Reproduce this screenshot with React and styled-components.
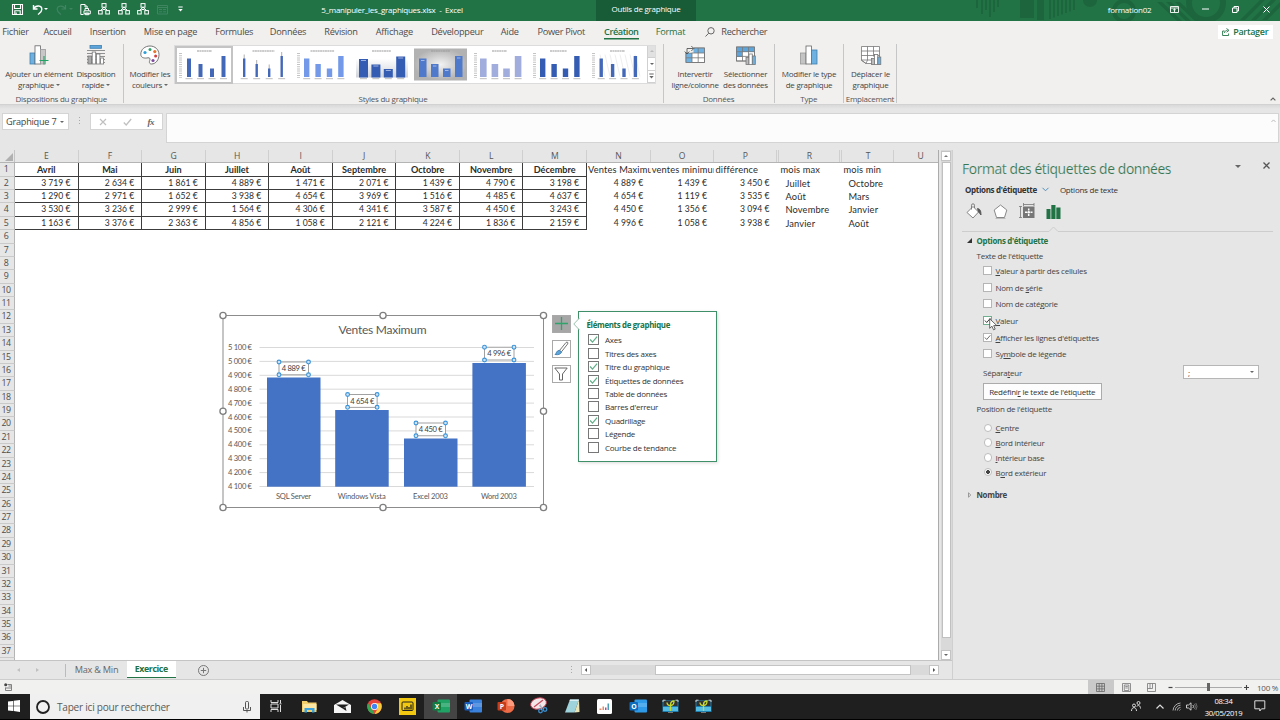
import React from "react";
import styled, { createGlobalStyle, css } from "styled-components";

const UI = `"Open Sans", "Noto Sans", sans-serif`;
const CAL = `Lato, "Open Sans", sans-serif`;
const GREEN = "#217346";

const Global = createGlobalStyle`
  *, *::before, *::after { box-sizing: border-box; }
  body { margin: 0; overflow: hidden; font-family: ${UI}; font-size: 8px; letter-spacing: -0.25px; color: #444; }
  svg { display: block; flex: none; overflow: visible; }
`;

const Window = styled.div`
  width: 1280px; height: 720px; display: flex; flex-direction: column;
  background: #e6e6e6; overflow: hidden; white-space: nowrap;
`;

/* ---------- title bar ---------- */
const TitleBar = styled.header`
  height: 20.5px; flex: none; display: flex; align-items: center; background: ${GREEN};
  color: #fff; position: relative; padding-bottom: 2px;
`;
const Decor = styled.svg`position: absolute; left: 970px; top: 0; overflow: hidden;`;
const Slot = styled.div`
  width: ${p => p.$w}px; margin-left: ${p => p.$l || 0}px; flex: none; display: flex;
  align-items: center; justify-content: center; position: relative;
`;
const ContextTab = styled(Slot)`height: 20.5px; margin-top: 2px; padding-bottom: 3px; background: #185c37;`;

/* ---------- ribbon ---------- */
const TabStrip = styled.nav`
  height: 22.5px; flex: none; display: flex; align-items: center; background: #f1f0ef; font-size: 9.2px;
`;
const Tab = styled.div`
  width: ${p => p.$w}px; margin-left: ${p => p.$l}px; flex: none; display: flex; justify-content: center;
  color: ${p => p.$green ? GREEN : "#4c4c4c"}; font-weight: ${p => p.$on ? 600 : 400}; line-height: 13px;
  letter-spacing: ${p => p.$on ? -0.45 : -0.27}px;
  ${p => p.$on && css`box-shadow: 0 1.5px 0 ${GREEN};`}
`;
const Share = styled.div`
  margin-left: auto; margin-right: 7px; width: 55.5px; height: 14.5px; background: #fff; color: ${GREEN};
  display: flex; align-items: center; justify-content: center; gap: 3px; font-weight: 600; font-size: 9px; letter-spacing: -0.3px;
`;
const Ribbon = styled.section`
  height: 62px; flex: none; display: flex; background: #f1f0ef; position: relative; border-bottom: 1px solid #d2d2d2;
`;
const Group = styled.div`
  width: ${p => p.$w}px; height: 58.5px; margin-top: 1px; border-right: 1px solid #c6c6c6; flex: none;
  display: flex; flex-direction: column; justify-content: space-between;
`;
const GroupBody = styled.div`display: flex; height: 44px;`;
const GroupName = styled.div`text-align: center; line-height: 10px; color: #555; margin-bottom: -1px;`;
const BigButton = styled.div`
  width: ${p => p.$w}px; margin-left: ${p => p.$l || 0}px; flex: none; display: flex; flex-direction: column;
  align-items: center; line-height: 11px; padding-top: 1px;
  svg { margin-bottom: 3px; }
`;
const Line = styled.div`display: flex; align-items: center; gap: 2px;`;
const Caret = styled.i`
  width: 0; height: 0; border: ${p => p.$s || 2}px solid transparent; border-bottom: 0;
  border-top-color: ${p => p.$c || "#666"};
`;
const Gallery = styled.div`
  display: flex; width: 482px; height: 39.5px; margin: 0.5px 0 0 2px; background: #fff; border: 1px solid #dcdcdc;
`;
const Thumb = styled.div`
  width: 59px; height: 38px; flex: none;
  ${p => p.$on && css`box-shadow: inset 0 0 0 2px #c4c4c4; width: 58px; margin-right: 1px;`}
`;
const GalleryNav = styled.div`
  width: 9px; margin-left: auto; display: flex; flex-direction: column; border-left: 1px solid #d0d0d0;
`;
const NavCell = styled.div`
  flex: 1; display: flex; align-items: center; justify-content: center; border-bottom: 1px solid #d0d0d0;
  background: ${p => p.$off ? "#e1e1e1" : "#fff"};
`;
const RibbonCollapse = styled.div`margin: 54px 4px 0 auto;`;

/* ---------- formula bar ---------- */
const FormulaBar = styled.section`
  height: 45px; flex: none; display: flex; align-items: flex-start; padding: 8px 1.5px 0 1.5px;
  background: linear-gradient(#d9d9d9, #e6e6e6 4px);
`;
const NameBox = styled.div`
  width: 67.5px; height: 17px; background: #fff; border: 1px solid #d4d4d4; display: flex; align-items: center;
  justify-content: space-between; padding: 0 4px 0 3.5px; font-size: 9.2px;
`;
const Grip = styled.div`
  width: 1px; height: 9px; margin: ${p => p.$m || "4px 10px"};
  background: repeating-linear-gradient(#aaa 0 1px, transparent 1px 3px);
`;
const FxBox = styled.div`
  width: 73px; height: 17px; background: #fff; border: 1px solid #d4d4d4; display: flex; align-items: center;
  justify-content: space-between; padding: 0 8px;
`;
const Fx = styled.span`font: italic 700 9px "Liberation Serif", serif; color: #666; letter-spacing: -0.5px;`;
const FormulaInput = styled.div`
  flex: 1; margin-left: 3px; height: 30px; background: #fcfcfc; border: 1px solid #d4d4d4; display: flex;
  justify-content: flex-end; padding: 5px 2px;
`;

/* ---------- work area ---------- */
const Work = styled.main`height: 529px; flex: none; display: flex;`;
const Left = styled.div`width: 952px; flex: none; display: flex; flex-direction: column;`;
const SheetRow = styled.div`height: 510px; display: flex;`;
const Sheet = styled.div`width: 938.5px; height: 510px; position: relative; overflow: hidden; background: #fff; border-right: 1px solid #ababab;`;
const HeadRow = styled.div`height: 13.3px; display: flex; background: #e6e6e6; border-bottom: 1px solid #b4b4b4;`;
const Corner = styled.div`
  width: 15px; height: 12.3px; border-right: 1px solid #c4c4c4; flex: none; display: flex; align-items: flex-end;
  justify-content: flex-end; padding: 1px;
`;
const ColHead = styled.div`
  width: ${p => p.$w}px; flex: none; font-size: 8.6px; line-height: 13px; text-align: center; color: #555;
  border-right: 1px solid #cfcfcf;
`;
const Row = styled.div`height: 13.39px; display: flex;`;
const RowHead = styled.div`
  width: 15px; flex: none; background: #e6e6e6; border-right: 1px solid #b4b4b4; border-bottom: 1px solid #cacaca;
  font-size: 8.8px; letter-spacing: -0.45px; line-height: 13.5px; text-align: center; color: #4c4c4c; padding-right: 2px;
`;
const Cell = styled.div`
  width: ${p => p.$w}px; flex: none; font-family: ${CAL}; font-size: 8.6px; letter-spacing: 0; color: #2c2c2c; line-height: 13.4px;
  text-align: ${p => p.$k === "head" ? "center" : p.$k === "num" ? "right" : "left"};
  padding: ${p => p.$k === "num" ? `0 ${p.$box ? 7 : 7.5}px 0 0` : p.$k === "ind" ? "0 0 0 6px" : p.$k === "txt" ? "0 0 0 1px" : 0};
  ${p => p.$k === "head" && css`font-weight: 700; font-size: 9.1px;`}
  ${p => (p.$k === "txt" || p.$k === "ind") && css`font-size: 9.3px; letter-spacing: 0.14px;`}
  ${p => p.$box && css`border-right: 1px solid #3c3c3c; border-bottom: 1px solid #3c3c3c;`}
  overflow: hidden;
`;

const VScroll = styled.div`
  width: 11px; margin-left: 2px; display: flex; flex-direction: column; align-items: center; background: #d9d9d9; padding-top: 1px;
`;
const ScrollBtn = styled.div`
  width: 10px; height: 10px; background: #fff; border: 1px solid #c4c4c4; display: flex; align-items: center; justify-content: center; flex: none;
`;
const VThumb = styled.div`width: 9px; height: 476px; background: #fff; border: 1px solid #c0c0c0; margin-top: 1px;`;
const Spacer = styled.div`flex: 1;`;

const SheetTabs = styled.div`height: 19px; display: flex; background: #e6e6e6; border-top: 1px solid #c4c4c4; align-items: center; font-size: 9.2px;`;
const NavArrow = styled.div`width: 8px; margin-left: ${p => p.$l}px; display: flex; justify-content: center;`;
const SheetTab = styled.div`
  width: ${p => p.$w}px; margin-left: ${p => p.$l || 0}px; height: 18px; line-height: 17px; text-align: center;
  ${p => p.$on ? css`background: #fff; color: ${GREEN}; font-weight: 700; font-size: 8.8px; letter-spacing: -0.4px; height: 17px; align-self: flex-start; border-bottom: 1.5px solid ${GREEN};`
    : css`border-left: 1px solid #bbb; height: 13px; line-height: 12px; color: #666;`}
`;
const HTrack = styled.div`width: 358px; height: 10px; margin-left: 3.5px; flex: none; display: flex; background: #dadada;`;
const HThumb = styled.div`width: 256px; background: #fff; border: 1px solid #c4c4c4; margin-right: 18px;`;

/* ---------- chart overlay ---------- */
const ChartBox = styled.div`position: absolute; left: 215px; top: 155px; letter-spacing: 0;`;
const ChartButtons = styled.div`position: absolute; left: 552px; top: 164.5px; display: flex; flex-direction: column; gap: 6.7px;`;
const ChartButton = styled.div`
  width: 18.5px; height: 18.5px; border: 1px solid #a9a9a9; background: ${p => p.$on ? "#a6a6a6" : "#fff"};
  display: flex; align-items: center; justify-content: center;
`;
const Flyout = styled.div`
  position: absolute; left: 578px; top: 161px; width: 138.5px; height: 151px; background: #fff;
  border: 1.4px solid #3f9068; padding: 7.5px 0 0 7.5px; box-shadow: 1px 1px 3px rgba(0,0,0,.15);
`;
const FlyArrow = styled.svg`position: absolute; left: -6px; top: 5px;`;
const FlyTitle = styled.div`font-weight: 700; color: ${GREEN}; font-size: 7.9px; line-height: 10px; margin-bottom: 3.8px; letter-spacing: -0.33px;`;
const FlyRow = styled.div`height: 13.4px; display: flex; align-items: center; gap: 6px; padding-left: 1.5px; color: #333;`;
const Box = styled.span`
  width: ${p => p.$s}px; height: ${p => p.$s}px; border: 1px solid ${p => p.$c}; background: #fff; flex: none;
  display: flex; align-items: center; justify-content: center;
`;

/* ---------- format pane ---------- */
const Pane = styled.aside`flex: 1; border-left: 1px solid #cfcfcf; padding: 9px 7px 0 9px; display: flex; flex-direction: column;`;
const PaneHead = styled.div`display: flex; height: 18px; align-items: center;`;
const PaneTitle = styled.h1`margin: 0; font-weight: 400; font-size: 13.9px; color: #35754f; letter-spacing: -0.4px; width: 273px; -webkit-text-stroke: 0.15px #e6e6e6;`;
const PaneCaret = styled.div`margin-top: -4px;`;
const PaneClose = styled.div`margin: -5px 0 0 22px;`;
const PaneTabs = styled.div`display: flex; align-items: center; height: 14px; margin-top: 5px; padding-left: 3px; gap: 5px; color: #333;
  b { letter-spacing: -0.33px; }
  span { margin-left: 6px; }`;
const PaneIcons = styled.div`display: flex; align-items: center; height: 18px; margin-top: 6px; padding-left: 4px; gap: 11px;`;
const PaneRule = styled.svg`margin-top: 7px;`;
const Section = styled.div`display: flex; align-items: center; gap: 4.5px; margin: ${p => p.$m}; padding-left: 5px; height: 10px; font-weight: 700; font-size: 7.9px; letter-spacing: -0.3px; color: ${p => p.$c};`;
const SubLabel = styled.div`margin: ${p => p.$m}; height: 10px; line-height: 10px;`;
const Option = styled.div`
  height: ${p => p.$h}px; display: flex; align-items: center; gap: 3.5px; padding-left: 21px; position: relative;
  u { text-underline-offset: 1px; }
`;
const Radio = styled.span`
  width: 8.5px; height: 8.5px; border-radius: 50%; border: 1px solid #bdbdbd; flex: none; margin-left: 0.5px;
  background: ${p => p.$on ? "radial-gradient(#444 0 1.6px, #fff 2.2px)" : "#fff"};
`;
const Cursor = styled.svg`position: absolute; left: 27px; top: 5.5px;`;
const SepRow = styled.div`display: flex; align-items: center; justify-content: space-between; height: 14px; margin: 2.8px 14px 0 21px;`;
const Select = styled.div`width: 76px; height: 13.5px; background: #fff; border: 1px solid #b6b6b6; display: flex; align-items: center; justify-content: space-between; padding: 0 4px;`;
const Reset = styled.div`
  width: 118.5px; height: 16.5px; margin: 4px 0 0 21px; background: #fdfdfd; border: 1px solid #ababab;
  display: flex; align-items: center; justify-content: center; color: #333;
`;
const Radios = styled.div`margin-top: 6.5px;`;

/* ---------- status bar and taskbar ---------- */
const Status = styled.footer`height: 15px; flex: none; background: #f1f1f0; border-top: 1px solid #cdcdcd; display: flex; align-items: center; padding: 0 2.5px 0 4px;`;
const Views = styled.div`display: flex; margin-left: auto; height: 14px;`;
const View = styled.div`width: 25.5px; display: flex; align-items: center; justify-content: center; background: ${p => p.$on ? "#c9c9c9" : "none"};`;
const Zoom = styled.div`display: flex; align-items: center; width: 81.5px; margin: 0 8px 0 3px; color: #555; justify-content: space-between;`;
const Percent = styled.span`width: 20.5px; color: #555;`;
const Slider = styled.div`width: 67px; height: 1px; background: #aaa; display: flex; align-items: center; justify-content: center;`;
const Handle = styled.div`width: 3px; height: 8px; background: #666;`;
const Taskbar = styled.footer`height: 25.5px; flex: none; background: #1f1f1f; border-bottom: 1px solid #000; display: flex; align-items: stretch; color: #fff;`;
const Start = styled.div`width: 30px; display: flex; align-items: center; justify-content: center; padding-right: 2px;`;
const Search = styled.div`width: 230px; background: #f0f0f0; color: #5a5a5a; display: flex; align-items: center; padding: 2px 9px 0 6px; gap: 7px; font-size: 10.1px; letter-spacing: -0.25px;
  svg:last-child { margin-left: auto; }`;
const AppSlot = styled.div`width: 32.85px; display: flex; align-items: center; justify-content: center; background: ${p => p.$on ? "#444" : "none"};`;
const Tray = styled.div`margin-left: auto; display: flex; align-items: center; padding-right: 14px;`;
const Clock = styled.div`width: 46px; margin: 1.5px 7.5px 0 3px; text-align: center; font-size: 7.7px; line-height: 12.2px; letter-spacing: -0.33px;`;

/* ---------- icons ---------- */
const Svg = ({ w = 12, h = w, vw = w, vh = h, s = "#fff", sw = 1, f = "none", children }) => (
  <svg width={w} height={h} viewBox={`0 0 ${vw} ${vh}`} fill={f} stroke={s} strokeWidth={sw}>{children}</svg>
);
const Tree = () => (
  <Svg w={12} sw={1}>
    <rect x="4" y="0.6" width="4" height="3.6" /><rect x="0.6" y="7.6" width="3.6" height="3.4" /><rect x="7.8" y="7.6" width="3.6" height="3.4" />
    <path d="M6 4.200 2.400 7.600M6 4.200l3.600 3.400M4.500 6.500h3" />
  </Svg>
);
const Up = ({ s = "#666", w = 6 }) => <Svg w={w} h={w / 2 + 1} vw={6} vh={4} s={s} sw={1.2}><path d="M.6 3.4 3 1l2.4 2.4" /></Svg>;
const UpFill = ({ s = "#777", w = 4 }) => <Svg w={w} h={w / 2} vw={4} vh={2} s="none" f={s}><path d="M0 2 2 0l2 2z" /></Svg>;
const CheckMark = ({ c = "#444", w = 7 }) => <Svg w={w} vw={8} vh={8} s={c} sw={1.1}><path d="M1 4l2.1 2.3L7.2 1.5" /></Svg>;

const AddElementIcon = () => (
  <Svg w={20} s="#666" sw={0.8}>
    <rect x="1" y="8" width="5" height="11" fill="#6fb1e0" stroke="#3f7fb0" /><rect x="6" y="0.8" width="5.4" height="18.2" fill="#fff" />
    <rect x="11.4" y="4.5" width="5" height="14.5" fill="#c8c8c8" stroke="#999" /><path d="M15 11v8.5M10.5 15.5h9" stroke="#21a366" strokeWidth="1.1" />
  </Svg>
);
const LayoutIcon = () => (
  <Svg w={20} s="#777" sw={0.8}>
    <rect x="4" y="0.5" width="11.5" height="2.8" fill="#5ea5dc" stroke="#3f7fb0" />
    <path d="M1 5.5h18M1 8.5h18M1 11.5h18M1 14.5h18M1 17.5h18" />
    <rect x="2" y="11" width="3.5" height="8" fill="#aaa" /><rect x="6.2" y="7" width="3.5" height="12" fill="#fff" /><rect x="10.4" y="9" width="3.5" height="10" fill="#fff" /><rect x="14.6" y="13" width="3" height="6" fill="#fff" />
  </Svg>
);
const PaletteIcon = () => (
  <Svg w={20} s="#666" sw={0.9}>
    <path d="M10 1c5 0 9 3.600 9 8.500c0 5-3 9.500-7.500 9.500-2.600 0-2.300-2.400-1.700-3.800.7-1.600-.2-2.700-1.800-2.400C5 13.400.8 13.300.8 9.200.8 4.400 5 1 10 1z" fill="#fff" />
    <g stroke="none"><circle cx="5" cy="7.5" r="1.6" fill="#2e9fd8" /><circle cx="10" cy="4.4" r="1.5" fill="#33a06c" /><circle cx="14.8" cy="6.600" r="1.6" fill="#e8762c" /><circle cx="15.600" cy="11" r="1.500" fill="#d23f3f" /><circle cx="13" cy="15.500" r="1.600" fill="#7d4aa0" /></g>
  </Svg>
);
const SwapIcon = () => (
  <Svg w={20} s="#777" sw={0.8}>
    <rect x="1" y="3" width="18.500" height="14.500" fill="#fff" /><path d="M7 3h12.500v5H7zM1 8h6v9.500H1z" fill="#6fb1e0" stroke="none" />
    <path d="M1 3h18.500v14.500H1zM1 8h18.500M1 12.800h18.500M7 3v14.500M13.200 3v14.500" />
    <path d="M-.5-.5h9v8h-9z" fill="#f1f0ef" stroke="none" /><path d="M2 8.500V3.500H8.500M6.300 1l2.500 2.500L6.300 6M-.3 6.500l2.300 2.500 2.300-2.500" stroke="#444" />
  </Svg>
);
const SelectDataIcon = () => (
  <Svg w={20} s="#777" sw={0.8}>
    <rect x="0.500" y="2" width="18" height="14" fill="#fff" /><path d="M.5 2h18v5H6v5H.5z" fill="#5ea5dc" stroke="none" />
    <path d="M.5 2h18v14H.5zM.5 6.700h18M.5 11.400h18M6.500 2v14M12.500 2v14" />
    <rect x="10" y="12.500" width="3" height="7" fill="#bbb" /><rect x="13" y="9" width="3.300" height="10.500" fill="#fff" /><rect x="16.300" y="11" width="3" height="8.500" fill="#6fb1e0" />
  </Svg>
);
const ChartTypeIcon = () => (
  <Svg w={20} s="#666" sw={0.8}>
    <rect x="1.500" y="8" width="5.500" height="11" fill="#c4c4c4" stroke="#999" /><rect x="7" y="1" width="5.500" height="18" fill="#fff" /><rect x="12.500" y="5" width="5.500" height="14" fill="#6fb1e0" stroke="#3f7fb0" />
  </Svg>
);
const MoveChartIcon = () => (
  <Svg w={20} s="#777" sw={0.8}>
    <path d="M.5 1.500h18v17H5l-4.500-3z" fill="#fff" /><path d="M.5 6h18M.5 10.500h18M.5 15h10M6.500 1.500v13.500M12.500 1.500v10M.5 15 5 18.500M5 18.500l1.500-3.500" />
    <rect x="10.500" y="13.500" width="3" height="6" fill="#bbb" /><rect x="13.500" y="9.500" width="3.300" height="10" fill="#fff" /><rect x="16.800" y="12" width="3" height="7.500" fill="#6fb1e0" />
  </Svg>
);

const THUMBS = [
  { w: 4, c: "#4468b8", x: 12, p: 11.5, axis: 1, t: 15 },
  { w: 2.4, c: "#4468b8", x: 9, p: 12.5, err: 1, t: 22 },
  { w: 5.4, c: "#7399e8", x: 11, p: 11.4, axis: 1, t: 24 },
  { w: 9, c: "#345cb2", x: 7, p: 12.4, shade: 1, t: 19 },
  { w: 7.5, c: "#4f79ca", x: 8, p: 12, dark: 1, t: 19 },
  { w: 6.6, c: "#a0addd", x: 10, p: 11.6, axis: 1, t: 15 },
  { w: 5.4, c: "#345cb2", x: 11, p: 11.4, axis: 1, t: 17 },
  { w: 3.4, c: "#4468b8", x: 11.5, p: 11.4, axis: 1, hatch: 1, t: 15 },
];
const TOPS = [14, 19.5, 24, 11.5];
const StyleThumb = ({ t, i }) => (
  <Thumb $on={i === 0}>
    <svg width="58" height="37" viewBox="0 1.500 58 37">
      {t.dark && <><defs><radialGradient id="dk"><stop offset="0" stopColor="#f2f2f2" /><stop offset="1" stopColor="#b2b2b2" /></radialGradient></defs><rect x="3" y="4" width="53" height="32" fill="url(#dk)" /></>}
      {t.shade && <><defs><linearGradient id="sh" x2="0" y2="1"><stop offset="0" stopColor="#fff" /><stop offset="1" stopColor="#cfd3da" /></linearGradient></defs><rect x="4" y="14" width="52" height="19" fill="url(#sh)" /></>}
      {t.hatch && [0, 1, 2, 3, 4, 5, 6, 7].map(k => <path key={k} d={`M${12 + k * 5} 10l5 22`} stroke="#e2e2e2" strokeWidth=".6" />)}
      <path d={`M${29.500 - t.t / 2} 6.500h${t.t}`} stroke="#999" strokeWidth="1.100" strokeDasharray="2 .4" />
      {t.axis && <path d="M5.500 8.500v25" stroke="#c4c4c4" strokeWidth="3" strokeDasharray="1 1.200" />}
      {TOPS.map((y, k) => (
        <g key={k}>
          {t.err && <path d={`M${t.x + k * t.p + 1.2} ${y - 4}v10`} stroke="#999" strokeWidth=".8" />}
          <rect x={t.x + k * t.p} y={t.shade ? y + 0.5 : y} width={t.w} height={32.5 - y} fill={t.c} />
          {(t.shade || t.dark) && <path d={`M${t.x + k * t.p + 2} ${y + 2}h${t.w - 4}`} stroke="#b9c8ea" strokeWidth=".8" />}
          <path d={`M${t.x + k * t.p + t.w / 2 - 3.5} 34.200h7`} stroke="#b4b4b4" strokeWidth=".9" />
        </g>
      ))}
    </svg>
  </Thumb>
);

/* ---------- sheet data ---------- */
const COLS = [["E", 63.5], ["F", 63.7], ["G", 63.5], ["H", 63.5], ["I", 63.6], ["J", 63.6], ["K", 63.6], ["L", 63.4], ["M", 63.6], ["N", 63.7], ["O", 63.8], ["P", 62.5], ["", 2.5], ["R", 60.5], ["", 2.5], ["T", 52], ["U", 53]];
const HEADS = ["Avril", "Mai", "Juin", "Juillet", "Août", "Septembre", "Octobre", "Novembre", "Décembre", "Ventes Maximum", "ventes minimum", "différence", "", "mois max", "", "mois min", ""];
const DATA = [
  ["3 719", "2 634", "1 861", "4 889", "1 471", "2 071", "1 439", "4 790", "3 198", "4 889", "1 439", "3 450", null, "Juillet", null, "Octobre", ""],
  ["1 290", "2 971", "1 652", "3 938", "4 654", "3 969", "1 516", "4 485", "4 637", "4 654", "1 119", "3 535", null, "Août", null, "Mars", ""],
  ["3 530", "3 236", "2 999", "1 564", "4 306", "4 341", "3 587", "4 450", "3 243", "4 450", "1 356", "3 094", null, "Novembre", null, "Janvier", ""],
  ["1 163", "3 376", "2 363", "4 856", "1 058", "2 121", "4 224", "1 836", "2 159", "4 996", "1 058", "3 938", null, "Janvier", null, "Août", ""],
];
const ROWS = Array.from({ length: 38 }, (_, i) => i + 1);
const kindOf = (r, i) => {
  if (COLS[i][0] === "") return "gap";
  if (r === 1) return i < 9 ? "head" : "txt";
  return i < 12 ? "num" : "ind";
};

const BARS = [
  { x: 267, y: 377.5, bx: 279, by: 362, v: "4 889 €", n: "SQL Server", nw: 35 },
  { x: 335.2, y: 410, bx: 347.6, by: 394.5, v: "4 654 €", n: "Windows Vista", nw: 48 },
  { x: 404, y: 438.5, bx: 416, by: 423, v: "4 450 €", n: "Excel 2003", nw: 35 },
  { x: 472.4, y: 363, bx: 484.5, by: 347.2, v: "4 996 €", n: "Word 2003", nw: 36 },
];
const AXIS = ["5 100", "5 000", "4 900", "4 800", "4 700", "4 600", "4 500", "4 400", "4 300", "4 200", "4 100"];

const Chart = () => (
  <ChartBox>
    <svg width="340" height="210" viewBox="215 305 340 210" fontFamily={CAL} fill="#595959">
      <rect x="223" y="315.500" width="320.500" height="192" fill="#fff" stroke="#8c8c8c" />
      <text x="382.500" y="334" textAnchor="middle" fontSize="12" textLength="88">Ventes Maximum</text>
      {AXIS.map((a, i) => (
        <g key={a}>
          <path d={`M259.500 ${347.5 + i * 13.9}H534`} stroke="#d9d9d9" />
          <text x="252" y={350 + i * 13.9} textAnchor="end" fontSize="7.600" textLength="24">{a} €</text>
        </g>
      ))}
      {BARS.map(b => (
        <g key={b.n}>
          <rect x={b.x} y={b.y} width="53.500" height={486.7 - b.y} fill="#4472c4" />
          <rect x={b.bx} y={b.by} width="29.500" height="12.800" fill="#fff" stroke="#8a8a8a" strokeWidth=".8" />
          <text x={b.bx + 14.7} y={b.by + 9} textAnchor="middle" fontSize="7.600" fill="#404040" textLength="24">{b.v}</text>
          {[[0, 0], [29.5, 0], [0, 12.8], [29.5, 12.8]].map(([dx, dy], k) => (
            <circle key={k} cx={b.bx + dx} cy={b.by + dy} r="1.900" fill="#cfe3f5" stroke="#3b94d9" strokeWidth="1.100" />
          ))}
          <text x={b.x + 26.5} y="499" textAnchor="middle" fontSize="7.600" textLength={b.nw}>{b.n}</text>
        </g>
      ))}
      {[[223, 315.5], [383, 315.5], [543.5, 315.5], [223, 411.3], [543.5, 411.3], [223, 507.5], [383, 507.5], [543.5, 507.5]].map(([x, y], k) => (
        <circle key={k} cx={x} cy={y} r="3.100" fill="#fff" stroke="#7f7f7f" strokeWidth="1.300" />
      ))}
    </svg>
  </ChartBox>
);

const FLY = [["Axes", 1], ["Titres des axes", 0], ["Titre du graphique", 1], ["Étiquettes de données", 1], ["Table de données", 0], ["Barres d'erreur", 0], ["Quadrillage", 1], ["Légende", 0], ["Courbe de tendance", 0]];

const TABS = [["Fichier", 3, 25], ["Accueil", 16, 27], ["Insertion", 20, 33.5], ["Mise en page", 19.5, 53], ["Formules", 19.5, 35.5], ["Données", 19, 34], ["Révision", 19.5, 33], ["Affichage", 18.5, 36.5], ["Développeur", 19.5, 50.5], ["Aide", 18.5, 17.5], ["Power Pivot", 19.5, 46.5]];

const OfficeApp = ({ c, d, l, round }) => (
  <Svg w={18} s="none">
    {round ? <circle cx="10.500" cy="9" r="7" fill={c} /> : <rect x="5.500" y="2.500" width="12.500" height="13" rx="1" fill={c} />}
    {!round && <path d="M5.500 6h12.500v4H5.500z" fill="#fff" opacity=".18" />}
    {round && <path d="M10.500 2a7 7 0 0 1 7 7h-7z" fill="#ff9a7c" />}
    <rect x="0.500" y="5" width="8.500" height="8.500" rx="1" fill={d} />
    <text x="4.800" y="11.700" textAnchor="middle" fontFamily={UI} fontWeight="700" fontSize="6.800" fill="#fff">{l}</text>
  </Svg>
);
const RemoteIcon = () => (
  <Svg w={17} h={15} s="none">
    <rect x="0.500" y="1" width="16" height="12" fill="#1e7fae" /><rect x="1.500" y="1.500" width="14" height="5.500" fill="#333" />
    <path d="M1 3V1.200h2.500M16 3V1.200h-2.500" stroke="#ccc" /><path d="M1 8h15v4H1z" fill="#54bde6" />
    <path d="M8.500 12V6M5 3.500c0 2 1.500 3 3.500 3s3.500-1.500 3.500-4.500c-2 0-3.500 1-3.500 4" stroke="#c4d931" strokeWidth="1.300" fill="none" /><path d="M6 13.500h5" stroke="#777" />
  </Svg>
);

export default function App() {
  return (
    <>
      <Global />
      <Window>
        <TitleBar>
          <Decor width="310" height="20.500" viewBox="970 0 310 20.500" fill="#1d663d">
            {[976, 981, 985, 989, 993, 997].map((x, i) => <rect key={x} x={x} y="0" width="2" height={[8, 14, 10, 17, 12, 7][i]} />)}
            <path d="M1020 0h14v18h-14zM1037 0h7v20h-7z" />
            {[1049, 1053, 1057, 1061, 1065, 1069, 1073].map((x, i) => <rect key={x} x={x} width="2" height={19 - i * 1.5} />)}
            <circle cx="1090" cy="0" r="7" /><circle cx="1124" cy="11" r="10" fill="none" stroke="#1d663d" strokeWidth="4" />
            <path d="M1157 2h5l20 19h-5zM1166 2h5l20 19h-5zM1175 2h5l20 19h-5zM1240 20l20-20h5l-20 20zM1251 20l20-20h5l-20 20zM1262 20l20-20h5l-20 20z" />
            <circle cx="1206" cy="3" r="17" fill="none" stroke="#1d663d" strokeWidth="6" />
          </Decor>
          <Slot $l={11} $w={12}><Svg w={11} sw={1.1}><path d="M.5.5h10v10H.5zM2.500.5v4h6v-4M2.800 10.500V6.800h5.400v3.700M4.200 8.500v2" /></Svg></Slot>
          <Slot $l={8} $w={12}><Svg w={11} sw={1.4}><path d="M1.500 1v4h4M1.500 5C4 .5 10 1.500 9.800 5.500 9.700 8 7.500 9 6 10.500" /></Svg></Slot>
          <Slot $w={6}><Caret $c="#fff" /></Slot>
          <Slot $l={6} $w={12}><Svg w={11} s="#3f8560" sw={1.2}><path d="M9.500 1v4h-4M9.500 5C7 .5 1 1.500 1.200 5.500 1.300 8 3.500 9 5 10.500" /></Svg></Slot>
          <Slot $l={1} $w={6}><Caret $c="#3f8560" /></Slot>
          <Slot $l={5} $w={12}><Svg w={11}><path d="M7.500 3.500V3L5 .5H.8v10h2.700M5 .5V3h2.500M5 6.500v-2h3.500v2M4 6.800h6.300v3H4zM5.300 9v1.700h3.500V9z" /></Svg></Slot>
          <Slot $l={7} $w={12}><Tree /></Slot><Slot $l={7.5} $w={12}><Tree /></Slot><Slot $l={7.5} $w={12}><Tree /></Slot>
          <Slot $l={7.5} $w={12}><Svg w={11} s="#3f8560"><path d="M.5 1.500h10v8.500H.5zM.5 3.500h10M2 5.500h3M6 5.500h3M2 7.800h3M6 7.800h3" /></Svg></Slot>
          <Slot $l={6.5} $w={10}><Svg w={5} h={6}><path d="M.3 1h4.400" /><path d="M.3 3h4.400L2.500 5.600z" fill="#fff" stroke="none" /></Svg></Slot>
          <Slot $l={136} $w={142}>5_manipuler_les_graphiques.xlsx&nbsp; - &nbsp;Excel</Slot>
          <ContextTab $l={133} $w={100}>Outils de graphique</ContextTab>
          <Slot $l={411.5} $w={44}>formation02</Slot>
          <Slot $l={15.5} $w={14}><Svg w={9} h={7}><path d="M.5.5h8v6h-8zM.5 2h8M4.500 6V3M3.200 4l1.300-1.200L5.800 4" strokeWidth=".9" /></Svg></Slot>
          <Slot $l={17} $w={14}><Svg w={7} h={2}><path d="M0 1h7" /></Svg></Slot>
          <Slot $l={16.5} $w={14}><Svg w={7}><path d="M.5 2h4.500v4.500H.5zM2 2V.5h4.500V5H5" /></Svg></Slot>
          <Slot $l={16.5} $w={14}><Svg w={7}><path d="M.5.5l6 6M6.500.5l-6 6" /></Svg></Slot>
        </TitleBar>

        <TabStrip>
          {TABS.map(([t, l, w]) => <Tab key={t} $l={l} $w={w}>{t}</Tab>)}
          <Tab $l={19.5} $w={34.5} $green $on>Création</Tab>
          <Tab $l={18} $w={28} $green>Format</Tab>
          <Slot $l={20} $w={11}><Svg w={10} s="#666"><circle cx="6" cy="3.800" r="3.200" /><path d="M3.700 6.200.5 9.500" /></Svg></Slot>
          <Tab $l={7} $w={43.5}>Rechercher</Tab>
          <Share><Svg w={8} s={GREEN} sw={0.9}><path d="M2.500 3H.6v4.500h6V5.500M2.500 5C2.700 3 4 2.300 5.500 2.300M4.500.5l2.500 1.900-2.500 1.800" /></Svg>Partager</Share>
        </TabStrip>

        <Ribbon>
          <Group $w={123.5}>
            <GroupBody>
              <BigButton $l={3} $w={72}><AddElementIcon />Ajouter un élément<Line>graphique<Caret /></Line></BigButton>
              <BigButton $w={42}><LayoutIcon />Disposition<Line>rapide<Caret /></Line></BigButton>
            </GroupBody>
            <GroupName>Dispositions du graphique</GroupName>
          </Group>
          <Group $w={540}>
            <GroupBody>
              <BigButton $l={4.5} $w={44}><PaletteIcon />Modifier les<Line>couleurs<Caret /></Line></BigButton>
              <Gallery>
                {THUMBS.map((t, i) => <StyleThumb key={i} t={t} i={i} />)}
                <GalleryNav><NavCell $off><UpFill s="#bbb" /></NavCell><NavCell><Caret /></NavCell><NavCell><Svg w={5} h={6} s="#666"><path d="M.3 1h4.400" /><path d="M.3 3h4.400L2.500 5.600z" fill="#666" stroke="none" /></Svg></NavCell></GalleryNav>
              </Gallery>
            </GroupBody>
            <GroupName>Styles du graphique</GroupName>
          </Group>
          <Group $w={111}>
            <GroupBody>
              <BigButton $l={5} $w={53}><SwapIcon />Intervertir<Line>ligne/colonne</Line></BigButton>
              <BigButton $w={48}><SelectDataIcon />Sélectionner<Line>des données</Line></BigButton>
            </GroupBody>
            <GroupName>Données</GroupName>
          </Group>
          <Group $w={69.5}>
            <GroupBody><BigButton $l={4} $w={61}><ChartTypeIcon />Modifier le type<Line>de graphique</Line></BigButton></GroupBody>
            <GroupName>Type</GroupName>
          </Group>
          <Group $w={53}>
            <GroupBody><BigButton $l={4} $w={45}><MoveChartIcon />Déplacer le<Line>graphique</Line></BigButton></GroupBody>
            <GroupName>Emplacement</GroupName>
          </Group>
          <RibbonCollapse><Up /></RibbonCollapse>
        </Ribbon>

        <FormulaBar>
          <NameBox>Graphique 7<Caret $s={2.3} /></NameBox>
          <Grip />
          <FxBox>
            <Svg w={8} s="#c0c0c0" sw={1.2}><path d="M1 1l6 6M7 1 1 7" /></Svg>
            <Svg w={9} h={8} s="#c0c0c0" sw={1.3}><path d="M.8 4.500 3.200 7 8.200 1" /></Svg>
            <Fx>fx</Fx>
          </FxBox>
          <FormulaInput><Up s="#bbb" w={5} /></FormulaInput>
        </FormulaBar>

        <Work>
          <Left>
            <SheetRow>
              <Sheet>
                <HeadRow>
                  <Corner><Svg w={8} s="none" f="#b0b0b0"><path d="M8 0v8H0z" /></Svg></Corner>
                  {COLS.map(([c, w], i) => <ColHead key={i} $w={w}>{c}</ColHead>)}
                </HeadRow>
                {ROWS.map(r => (
                  <Row key={r}>
                    <RowHead>{r < 38 ? r : ""}</RowHead>
                    {r < 6 && (r === 1 ? HEADS : DATA[r - 2]).map((v, i) => {
                      const k = kindOf(r, i);
                      return <Cell key={i} $w={COLS[i][1]} $k={k} $box={i < 9}>{k === "num" ? `${v} €` : v}</Cell>;
                    })}
                  </Row>
                ))}
                <Chart />
                <ChartButtons>
                  <ChartButton $on><Svg w={13} s="#2fa36b" sw={1.3}><path d="M6.500 0v13M0 6.500h13" /></Svg></ChartButton>
                  <ChartButton><Svg w={15} s="#666" sw={0.9}><path d="M5.500 9.500 12 1.500c1.300-1 2.500 0 1.600 1.500L7.500 10.800z" fill="#fff" /><path d="M5.300 9.300 7.500 11c-.5 2-3 3.200-6.500 2.500 1.500-.8 1.300-4 4.300-4.200z" fill="#5ea5dc" stroke="#3f7fb0" /></Svg></ChartButton>
                  <ChartButton><Svg w={14} s="#666"><path d="M.8 1h12.400L8.500 7v6h-3V7z" /></Svg></ChartButton>
                </ChartButtons>
                <Flyout>
                  <FlyArrow width="6" height="14" viewBox="0 0 6 14"><path d="M6.500 1 .8 7l5.700 6" fill="#fff" stroke="#9ac4ae" /></FlyArrow>
                  <FlyTitle>Éléments de graphique</FlyTitle>
                  {FLY.map(([t, on]) => <FlyRow key={t}><Box $s={11} $c="#777">{on ? <CheckMark c="#5fae88" w={9} /> : null}</Box>{t}</FlyRow>)}
                </Flyout>
              </Sheet>
              <VScroll>
                <ScrollBtn><UpFill /></ScrollBtn><VThumb /><Spacer /><ScrollBtn><Caret /></ScrollBtn>
              </VScroll>
            </SheetRow>
            <SheetTabs>
              <NavArrow $l={14}><Svg w={3} h={4} s="none" f="#c0c0c0"><path d="M3 0v4L0 2z" /></Svg></NavArrow>
              <NavArrow $l={11}><Svg w={3} h={4} s="none" f="#c0c0c0"><path d="M0 0v4l3-2z" /></Svg></NavArrow>
              <SheetTab $l={24} $w={62}>Max &amp; Min</SheetTab>
              <SheetTab $on $w={48.5}>Exercice</SheetTab>
              <Slot $l={22} $w={12}><Svg w={11} s="#777"><circle cx="5.500" cy="5.500" r="5" /><path d="M5.500 2.800v5.400M2.800 5.500h5.400" /></Svg></Slot>
              <Slot $l={356} $w={12}><Grip $m="0" /></Slot>
              <HTrack>
                <ScrollBtn><Svg w={4} s="none" f="#555"><path d="M3 0v4L.8 2z" /></Svg></ScrollBtn>
                <Spacer />
                <HThumb />
                <ScrollBtn><Svg w={4} s="none" f="#555"><path d="M1 0v4l2.200-2z" /></Svg></ScrollBtn>
              </HTrack>
            </SheetTabs>
          </Left>

          <Pane>
            <PaneHead>
              <PaneTitle>Format des étiquettes de données</PaneTitle>
              <PaneCaret><Caret as="div" $s={3} /></PaneCaret>
              <PaneClose><Svg w={7} s="#555" sw={1.3}><path d="M.5.5l6 6M6.500.5l-6 6" /></Svg></PaneClose>
            </PaneHead>
            <PaneTabs><b>Options d'étiquette</b><Svg w={7} h={5} s="#4f8fc0"><path d="M.5.800l3 3 3-3" /></Svg><span>Options de texte</span></PaneTabs>
            <PaneIcons>
              <Svg w={16} s="#777" sw={0.9}><path d="M1 9.500 7 3.500l5.500 5.500L7 15z" fill="#fff" /><path d="M5.500 6.500V2.300a1.500 1.500 0 0 1 3 0V5" /><path d="M11.500 5.500c2.500.5 3.500 2 3.500 6.500-1-1.500-2-2.300-2.500-3z" fill="#555" stroke="#555" /></Svg>
              <Svg w={15} s="#888"><path d="M7.500 1 13.800 6 11.500 13.500h-8L1.200 6z" fill="#fff" /><path d="M2.500 14.500h10" stroke="#bbb" /></Svg>
              <Svg w={16} s="#777"><rect x="4.500" y="4" width="10.500" height="10.500" fill="#777" /><path d="M9.700 5.500v2M9.700 11v2M6 9.300h2M11.500 9.300h2" stroke="#fff" strokeWidth="1.500" /><circle cx="9.700" cy="9.300" r="1.300" fill="#fff" stroke="none" /><path d="M1.500 3.500v11M0 3.500h3M0 14.500h3M4.500 1.500H15M4.500 0v3M15 0v3" strokeWidth=".8" /></Svg>
              <Svg w={15} s="none" f={GREEN}><path d="M.5 5h4v10h-4zM5.300 1h4.200v14H5.300zM10.300 3.500h4.200V15h-4.200z" /></Svg>
            </PaneIcons>
            <PaneRule width="311" height="5" viewBox="0 0 311 5" fill="none" stroke="#cdcdcd"><path d="M0 4.500h87l4.500-4.500 4.500 4.500h215" /></PaneRule>
            <Section $m="3.500px 0 0" $c={GREEN}><Svg w={5} s="none" f="#333"><path d="M5 0v5H0z" /></Svg>Options d'étiquette</Section>
            <SubLabel $m="5px 0 1.700px 14.500px">Texte de l'étiquette</SubLabel>
            <Option $h={16.7}><Box $s={9} $c="#b5b5b5" /><span><u>V</u>aleur à partir des cellules</span></Option>
            <Option $h={16.7}><Box $s={9} $c="#b5b5b5" /><span>Nom de <u>s</u>érie</span></Option>
            <Option $h={16.7}><Box $s={9} $c="#b5b5b5" /><span>Nom de caté<u>g</u>orie</span></Option>
            <Option $h={16.7}><Box $s={9} $c="#6fae8e"><CheckMark c="#333" /></Box><span><u>V</u>aleur</span>
              <Cursor width="9" height="13" viewBox="0 0 9 13"><path d="M.7.8v9.500L3 8.200l1.500 3.600 1.700-.7-1.500-3.500h3.100z" fill="#fff" stroke="#444" strokeWidth=".8" /></Cursor>
            </Option>
            <Option $h={16.7}><Box $s={9} $c="#b5b5b5"><CheckMark c="#666" /></Box><span><u>A</u>fficher les lignes d'étiquettes</span></Option>
            <Option $h={16.7}><Box $s={9} $c="#b5b5b5" /><span>Sy<u>m</u>bole de légende</span></Option>
            <SepRow><span>Sépara<u>t</u>eur</span><Select>;<Caret /></Select></SepRow>
            <Reset><span>Redéfini<u>r</u> le texte de l'étiquette</span></Reset>
            <SubLabel $m="4.300px 0 0 14.500px">Position de l'étiquette</SubLabel>
            <Radios>
              <Option $h={14.8}><Radio /><span><u>C</u>entre</span></Option>
              <Option $h={14.8}><Radio /><span><u>B</u>ord intérieur</span></Option>
              <Option $h={14.8}><Radio /><span><u>I</u>ntérieur base</span></Option>
              <Option $h={14.8}><Radio $on /><span>B<u>o</u>rd extérieur</span></Option>
            </Radios>
            <Section $m="10.500px 0 0" $c="#444"><Svg w={5} h={6} s="#888" sw={0.8}><path d="M1.500.8v4.400L3.800 3z" /></Svg>Nombre</Section>
          </Pane>
        </Work>

        <Status>
          <Svg w={8} s="#777" sw={0.9}><path d="M3.500 1.500h4v6h-6v-3M1.500 5h6M4.500 3h3" /><circle cx="1.700" cy="1.700" r="1.500" fill="#444" stroke="none" /></Svg>
          <Views>
            <View $on><Svg w={9} s="#666" sw={0.8}><path d="M.5.5h8v8h-8zM.5 3.200h8M.5 5.900h8M3.200.5v8M5.900.5v8" /></Svg></View>
            <View><Svg w={9} s="#777" sw={0.8}><path d="M.5.5h8v8h-8zM2.300 2h4.500v5.500H2.300zM3.300 3.500h2.500M3.300 5h2.500" /></Svg></View>
            <View><Svg w={9} s="#777" sw={0.8}><path d="M.5.5h8v8h-8zM.5 5.500h5v-5M3 .5v5" /></Svg></View>
          </Views>
          <Zoom><Svg w={5} s="#444" sw={1.2}><path d="M.5 2.500h4" /></Svg><Slider><Handle /></Slider><Svg w={5} s="#444" sw={1.1}><path d="M0 2.500h5M2.500 0v5" /></Svg></Zoom>
          <Percent>100 %</Percent>
        </Status>

        <Taskbar>
          <Start><Svg w={12} s="none" f="#fff"><path d="M0 1.600 5 .9v4.800H0zM5.600.8 12 0v5.700H5.600zM0 6.300h5v4.800l-5-.7zM5.600 6.300H12V12l-6.400-.9z" /></Svg></Start>
          <Search>
            <Svg w={14} s="#222" sw={1.8}><circle cx="7" cy="7" r="6" /></Svg>Taper ici pour rechercher
            <Svg w={8} h={12} s="#444" sw={0.9}><rect x="2.500" y=".5" width="3" height="7.500" rx="1" /><path d="M.5 6v3.500h7V6M4 9.500v2" /></Svg>
          </Search>
          <AppSlot><Svg w={12} s="#ddd"><path d="M1 0v2.500h7V0M1 12V9.500h7V12M1 4h7v4H1zM10.500 0v3M10.500 5v7M9.500 3.800h2" /></Svg></AppSlot>
          <AppSlot><Svg w={15} h={13} s="none"><path d="M0 1h5l1 1.500h8.500V12H0z" fill="#f2cf6b" /><path d="M1 4h13.500v6H1z" fill="#fbe6a4" /><path d="M2.500 12.500V8h10v4.500h-2.500V10h-5v2.500z" fill="#3fa4dc" /></Svg></AppSlot>
          <AppSlot><Svg w={17} h={13} s="none"><path d="M0 5 8.500 0 17 5v8H0z" fill="#f5f5f5" /><path d="M2 4.500h13L8.500 8.500z" fill="#1f1f1f" /><path d="m8.500 8.500 4 2.500-1-4z" fill="#1f1f1f" /></Svg></AppSlot>
          <AppSlot><Svg w={15} s="none"><circle cx="7.500" cy="7.500" r="7.300" fill="#e8453c" /><path d="M1 4.200 4.600 9.500l3 5.500A7.500 7.500 0 0 1 1 4.200z" fill="#34a853" /><path d="M14 4.200H7.500l3.500 5L7.600 15A7.500 7.500 0 0 0 14 4.200z" fill="#fbc93d" /><circle cx="7.500" cy="7.500" r="3.500" fill="#fff" /><circle cx="7.500" cy="7.500" r="2.700" fill="#4285f4" /></Svg></AppSlot>
          <AppSlot><Svg w={17} s="#222"><rect width="17" height="17" fill="#f2c811" stroke="none" /><rect x="3" y="4" width="11" height="8.500" rx="1" /><path d="M6 11.500V9.500M8 11.500V8M10 11.500V9M12 11.500v-5" strokeWidth="1.300" /></Svg></AppSlot>
          <AppSlot $on><OfficeApp c="#21a366" d="#107c41" l="X" /></AppSlot>
          <AppSlot><OfficeApp c="#3b82dd" d="#185abd" l="W" /></AppSlot>
          <AppSlot><OfficeApp c="#ed6c47" d="#c43e1c" l="P" round /></AppSlot>
          <AppSlot><Svg w={18} s="none"><ellipse cx="8.500" cy="6.500" rx="8" ry="5.500" fill="#f3e6e8" stroke="#c8475a" strokeWidth=".9" transform="rotate(-15 8.500 6.500)" /><path d="m4 10 9-7" stroke="#c8475a" strokeWidth="1.200" /><circle cx="10.500" cy="14" r="1.800" stroke="#3b8fd0" strokeWidth="1.300" /><circle cx="15" cy="12.500" r="1.800" stroke="#3b8fd0" strokeWidth="1.300" /><path d="m11.500 12.500-1-5M13.500 11.500 9 8.500" stroke="#aab" /></Svg></AppSlot>
          <AppSlot><Svg w={16} s="none"><path d="M6 1.500h9l-4.500 13H1z" fill="#9fd3dc" /><path d="M15 1.500l.5 12.500-5 .5z" fill="#e9e4b8" /><path d="M6 1.500h9l-.5 1.500H5.500z" fill="#d9eef2" /></Svg></AppSlot>
          <AppSlot><Svg w={15} s="none"><rect width="15" height="15" rx="1.500" fill="#fff" /><path d="M2.500 11V9.500h2V11zM5.500 11V7.500h1.500V11z" fill="#e08a6a" /><path d="M8 11V8.500h1.500V11z" fill="#b04a8a" /><path d="M10.500 11V4.500H12V11z" fill="#4a9fb8" /></Svg></AppSlot>
          <AppSlot><OfficeApp c="#2f9be8" d="#0f6cbd" l="O" /></AppSlot>
          <AppSlot><RemoteIcon /></AppSlot>
          <AppSlot><RemoteIcon /></AppSlot>
          <Tray>
            <Slot $w={14}><Svg w={10} s="#ddd"><circle cx="3" cy="4.500" r="1.500" /><circle cx="7.500" cy="2" r="1.500" /><path d="M.5 10c0-4.500 5-4.500 5 0M5.800 5.500C7 3.500 9.500 4.500 9.500 7.500" /></Svg></Slot>
            <Slot $w={12} $l={11}><Svg w={8} h={5} s="#ddd" sw={1.2}><path d="M.5 4.500 4 1l3.500 3.500" /></Svg></Slot>
            <Slot $w={12} $l={4}><Svg w={9} s="#bbb" sw={0.9}><path d="M1 8.500a8 8 0 0 1 7.500-7.500M3.200 8.500a5.500 5.500 0 0 1 5.300-5.300M5.400 8.500a3.200 3.200 0 0 1 3.100-3.100M7.500 8.500l1-1" /></Svg></Slot>
            <Slot $w={12} $l={3.5}><Svg w={11} h={9} s="#ddd" sw={0.9}><path d="M.5 3h2L5 .8v7.400L2.500 6h-2zM6.800 3a2 2 0 0 1 0 3" /><path d="M8.300 1.800a4 4 0 0 1 0 5.400M9.800 1a6 6 0 0 1 0 7" stroke="#777" /></Svg></Slot>
            <Clock>08:34<br />30/05/2019</Clock>
            <Svg w={12} h={12} s="#ddd"><path d="M.8.800h10v8H7.500L5.800 11V8.800h-5z" /></Svg>
          </Tray>
        </Taskbar>
      </Window>
    </>
  );
}
